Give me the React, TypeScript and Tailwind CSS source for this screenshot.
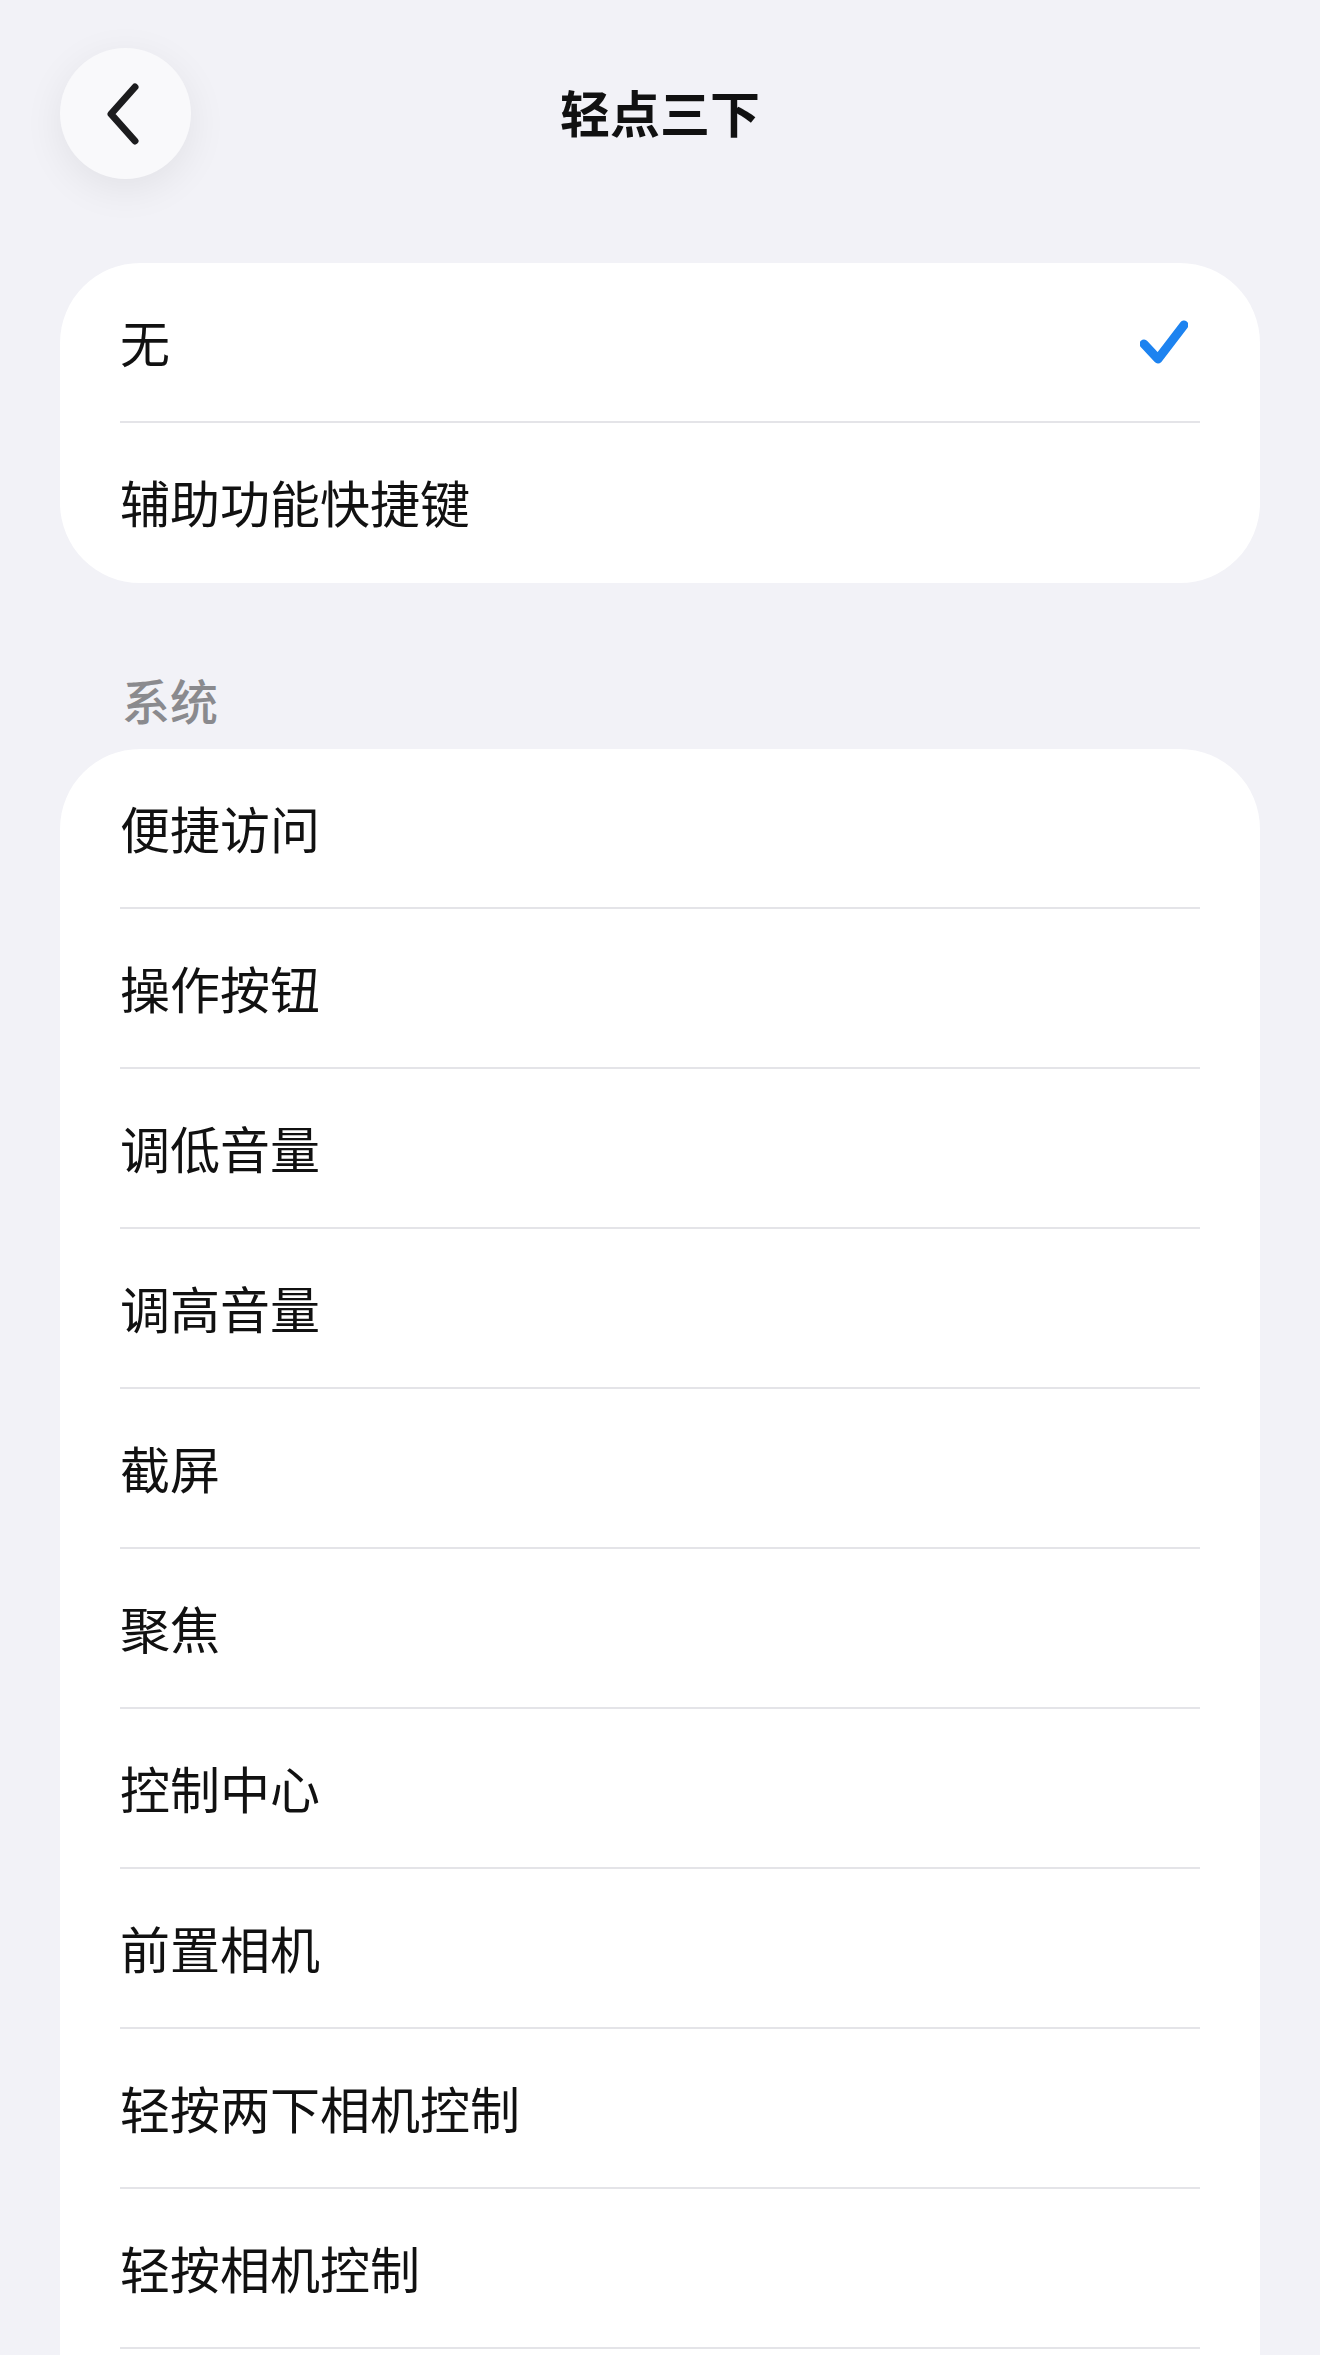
import React from 'react';

const FONT = { fontFamily: "'Noto Sans CJK SC', 'Noto Sans', sans-serif" };

const topOptions = [
  { label: '无', checked: true },
  { label: '辅助功能快捷键', checked: false },
];

const systemOptions = [
  '便捷访问',
  '操作按钮',
  '调低音量',
  '调高音量',
  '截屏',
  '聚焦',
  '控制中心',
  '前置相机',
  '轻按两下相机控制',
  '轻按相机控制',
];

const Check = () => (
  <svg width="48" height="46" viewBox="0 0 48 46" fill="none">
    <path d="M4 24 L18 39 L44 5" stroke="#1d83f0" strokeWidth="9" strokeLinecap="round" strokeLinejoin="round" />
  </svg>
);

const Row: React.FC<{ label: string; checked?: boolean; last?: boolean }> = ({ label, checked, last }) => (
  <div className="relative h-[160px] flex items-center justify-between pl-[60px] pr-[72px]">
    <span className="text-[50px] leading-none text-[#111] pb-[5px]">{label}</span>
    {checked && <Check />}
    {!last && <div className="absolute bottom-0 left-[60px] right-[60px] h-[2px] bg-[#e4e4e8]" />}
  </div>
);

export default function App() {
  return (
    <div className="w-full h-[2355px] overflow-hidden bg-[#f2f2f7] px-[60px] pt-[48px]" style={FONT}>
      <div className="grid grid-cols-[131px_1fr_131px] items-center h-[131px]">
        <button className="w-[131px] h-[131px] rounded-full bg-[#f9f9fb] shadow-[0_10px_40px_rgba(0,0,0,0.07)] flex items-center justify-center">
          <svg width="40" height="62" viewBox="0 0 40 62" fill="none" className="-ml-[6px]">
            <path d="M32 4 L8 31 L32 58" stroke="#1c1c1e" strokeWidth="7" strokeLinecap="round" strokeLinejoin="round" />
          </svg>
        </button>
        <h1 className="text-center text-[50px] font-bold leading-none text-[#111] pb-[6px]">轻点三下</h1>
        <div />
      </div>

      <div className="mt-[84px] bg-white rounded-[80px] overflow-hidden">
        {topOptions.map((o, i) => (
          <Row key={o.label} label={o.label} checked={o.checked} last={i === topOptions.length - 1} />
        ))}
      </div>

      <div className="mt-[88px] mb-[18px] h-[60px] flex items-center pl-[62px] pb-[5px] text-[48px] font-medium text-[#8a8a8e]">
        系统
      </div>

      <div className="bg-white rounded-t-[80px] pb-[200px]">
        {systemOptions.map(label => (
          <Row key={label} label={label} />
        ))}
      </div>
    </div>
  );
}
